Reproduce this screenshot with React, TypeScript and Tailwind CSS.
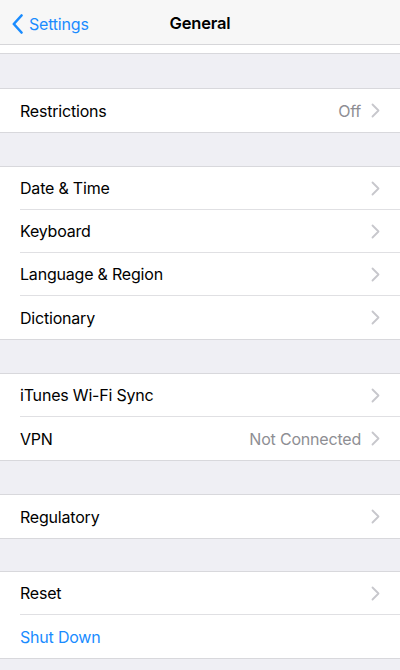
import React from "react";

const Chevron = () => (
  <svg width="9" height="15" viewBox="0 0 9 15" className="shrink-0">
    <path d="M1.5 1.5 L7.5 7.5 L1.5 13.5" fill="none" stroke="#c7c7cc" strokeWidth="1.8" strokeLinecap="round" strokeLinejoin="round" />
  </svg>
);

type Row = { label: string; value?: string; blue?: boolean; chevron?: boolean };

const Section = ({ rows }: { rows: Row[] }) => (
  <div className="bg-white border-y border-[#d8d8dc] shrink-0">
    {rows.map((r, i) => (
      <div key={r.label} className="pl-[20px]">
        <div
          className={`flex items-center h-[43px] pr-[20px] ${i < rows.length - 1 ? "border-b border-[#e0e0e3]" : ""}`}
        >
          <span className={`flex-1 text-[16px] tracking-[-0.2px] ${r.blue ? "text-[#1a8cff]" : "text-black"}`}>{r.label}</span>
          {r.value && <span className="text-[16px] tracking-[-0.2px] text-[#8e8e93] mr-[10px]">{r.value}</span>}
          {r.chevron !== false && <Chevron />}
        </div>
      </div>
    ))}
  </div>
);

export default function App() {
  return (
    <div
      className="w-[400px] h-[670px] overflow-hidden bg-[#efeff4] flex flex-col"
      style={{ fontFamily: "Inter, 'Noto Sans', sans-serif" }}
    >
      <div className="h-[45px] shrink-0 bg-[#f7f7f7] border-b border-[#d6d6d9] relative flex items-center pt-[3px]">
        <div className="flex items-center pl-[12px] gap-[6px]">
          <svg width="11" height="20" viewBox="0 0 11 20">
            <path d="M9.5 1.5 L1.8 10 L9.5 18.5" fill="none" stroke="#1a8cff" strokeWidth="2.6" strokeLinecap="round" strokeLinejoin="round" />
          </svg>
          <span className="text-[16px] tracking-[-0.2px] text-[#1a8cff]">Settings</span>
        </div>
        <div className="absolute left-0 right-0 text-center text-[16.5px] tracking-[-0.2px] font-semibold text-black pointer-events-none">General</div>
      </div>
      <div className="h-[9px] shrink-0 bg-white border-b border-[#d8d8dc]" />
      <div className="h-[34px] shrink-0" />
      <Section rows={[{ label: "Restrictions", value: "Off" }]} />
      <div className="h-[33px] shrink-0" />
      <Section
        rows={[
          { label: "Date & Time" },
          { label: "Keyboard" },
          { label: "Language & Region" },
          { label: "Dictionary" },
        ]}
      />
      <div className="h-[33px] shrink-0" />
      <Section rows={[{ label: "iTunes Wi-Fi Sync" }, { label: "VPN", value: "Not Connected" }]} />
      <div className="h-[33px] shrink-0" />
      <Section rows={[{ label: "Regulatory" }]} />
      <div className="h-[32px] shrink-0" />
      <Section rows={[{ label: "Reset" }, { label: "Shut Down", blue: true, chevron: false }]} />
    </div>
  );
}
